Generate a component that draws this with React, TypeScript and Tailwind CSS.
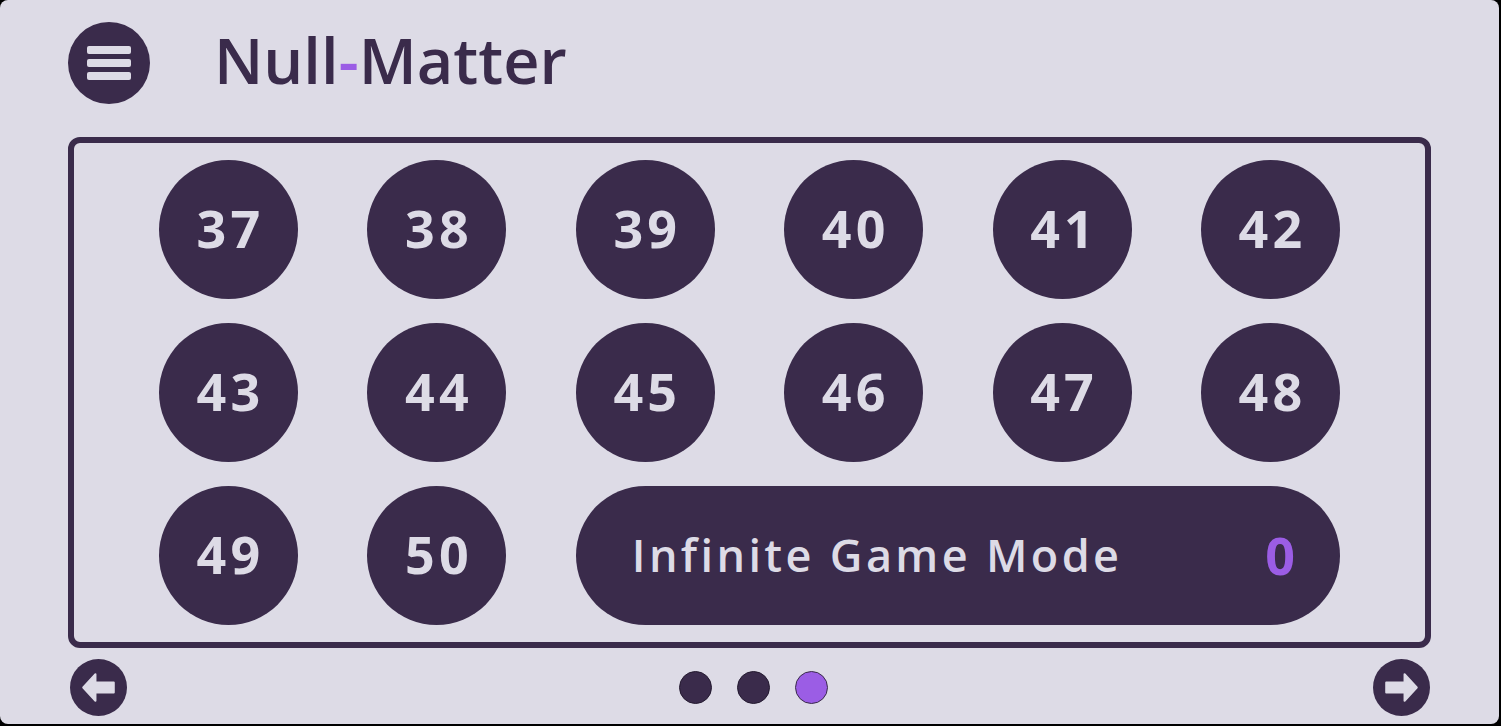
const levels = [37, 38, 39, 40, 41, 42, 43, 44, 45, 46, 47, 48, 49, 50];

function LevelButton({ n }: { n: number }) {
  return (
    <button className="w-[139px] h-[139px] rounded-full bg-[#3a2b4b] flex items-center justify-center text-[#dddbe6] text-[52px] font-bold tracking-[0.08em] leading-none pb-[4px] pl-[4px]">
      {n}
    </button>
  );
}

function ArrowButton({ dir }: { dir: "left" | "right" }) {
  return (
    <svg width="57" height="57" viewBox="0 0 56 56" className={dir === "right" ? "-scale-x-100" : ""}>
      <circle cx="28" cy="28" r="28" fill="#3a2b4b" />
      <path
        d="M13 28 L25 15 L25 23 L43 23 L43 33 L25 33 L25 41 Z"
        fill="#dddbe6"
        stroke="#dddbe6"
        strokeWidth="2"
        strokeLinejoin="round"
      />
    </svg>
  );
}

export default function App() {
  return (
    <div
      className="w-[1501px] h-[726px] bg-black overflow-hidden"
      style={{ fontFamily: '"Open Sans", "Noto Sans", sans-serif' }}
    >
      <div className="w-[1499px] h-[724px] bg-[#dddbe6] rounded-[8px] flex flex-col">
        {/* Header */}
        <header className="flex items-center pl-[68px] pt-[22px] h-[104px]">
          <button className="w-[82px] h-[82px] rounded-full bg-[#3a2b4b] flex flex-col items-center justify-center gap-[5px]">
            <span className="w-[44px] h-[8px] rounded-[2px] bg-[#dddbe6]" />
            <span className="w-[44px] h-[8px] rounded-[2px] bg-[#dddbe6]" />
            <span className="w-[44px] h-[8px] rounded-[2px] bg-[#dddbe6]" />
          </button>
          <h1 className="ml-[64px] mb-[8px] text-[63px] font-semibold leading-none text-[#3a2b4b]">
            Null<span className="text-[#9b5de5]">-</span>Matter
          </h1>
        </header>

        {/* Level panel */}
        <div className="mt-[33px] mx-[68px] h-[511px] border-[6px] border-[#3a2b4b] rounded-[12px] px-[85px] py-[17px]">
          <div className="grid grid-cols-[repeat(6,139px)] justify-between gap-y-[24px]">
            {levels.map((n) => (
              <LevelButton key={n} n={n} />
            ))}
            <button className="col-span-4 h-[139px] rounded-full bg-[#3a2b4b] flex items-center justify-between pl-[56px] pr-[45px] pb-[2px]">
              <span className="text-[#dddbe6] text-[45px] font-semibold tracking-[0.075em] leading-none">
                Infinite Game Mode
              </span>
              <span className="text-[#9b5de5] text-[52px] font-bold leading-none">0</span>
            </button>
          </div>
        </div>

        {/* Footer nav */}
        <div className="mt-[11px] flex items-center justify-between pl-[70px] pr-[69px]">
          <ArrowButton dir="left" />
          <div className="flex items-center gap-[25px] ml-[6px]">
            <span className="w-[33px] h-[33px] rounded-full bg-[#3a2b4b] border border-[#241a30]" />
            <span className="w-[33px] h-[33px] rounded-full bg-[#3a2b4b] border border-[#241a30]" />
            <span className="w-[33px] h-[33px] rounded-full bg-[#9b5de5] border border-[#3a2b4b]" />
          </div>
          <ArrowButton dir="right" />
        </div>
      </div>
    </div>
  );
}
